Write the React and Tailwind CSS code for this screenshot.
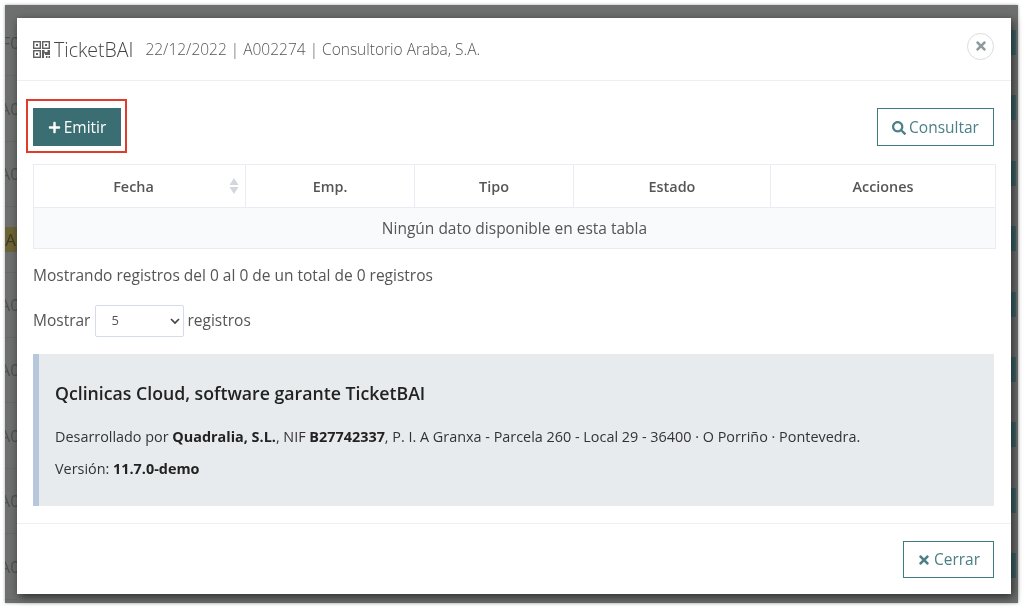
import { FaPlus, FaSearch, FaTimes } from "react-icons/fa";

const leftRows = ["F0", "A0", "A0", "A", "A0", "A0", "A0", "A0", "A0"];
const columns = [
  { label: "Fecha", width: "w-[212px] pr-[12px]", sort: true },
  { label: "Emp.", width: "w-[169px]" },
  { label: "Tipo", width: "w-[159px]" },
  { label: "Estado", width: "w-[197px]" },
  { label: "Acciones", width: "flex-1" },
];

function QrIcon() {
  return (
    <svg width="17" height="17" viewBox="0 0 17 17" className="text-[#5f5f5f]">
      <g fill="none" stroke="currentColor" strokeWidth="1.4">
        <rect x="0.7" y="0.7" width="6.6" height="6.6" />
        <rect x="9.7" y="0.7" width="6.6" height="6.6" />
        <rect x="0.7" y="9.7" width="6.6" height="6.6" />
      </g>
      <g fill="currentColor">
        <rect x="3" y="3" width="2" height="2" />
        <rect x="12" y="3" width="2" height="2" />
        <rect x="3" y="12" width="2" height="2" />
        <path d="M9 9h2.5v2h3V9H17v5h-5v-1.5H11V17H9zM13 15h1.5v2H13zM15.5 15H17v2h-1.5z" />
      </g>
    </svg>
  );
}

function SortIcon() {
  return (
    <svg width="10" height="16" viewBox="0 0 10 16" className="absolute right-[6px] top-[13px]">
      <path d="M5 0l4.5 7h-9z" fill="#d3d6da" />
      <path d="M5 16L.5 9h9z" fill="#d3d6da" />
    </svg>
  );
}

export default function App() {
  return (
    <div className="h-[609px] w-[1024px] overflow-hidden bg-white pt-[5px] pl-[5px] blur-[0.45px] font-['Open_Sans',sans-serif]">
      <div className="grid h-[598px] w-[1013px] grid-cols-[12px_994px_7px] bg-[#6e6f6f] shadow-[0_0_3px_rgba(0,0,0,0.35)]">
        {/* page behind the overlay, left edge */}
        <div className="flex flex-col overflow-hidden pt-[6px]">
          {leftRows.map((t, i) => (
            <div
              key={i}
              className="flex h-[65.4px] shrink-0 items-center justify-end border-b border-[#676868] text-[17px] whitespace-nowrap text-[#505050]"
            >
              {t === "A" ? (
                <span className="flex h-[25px] w-full items-center justify-end bg-[#6d6436] pr-[1px] text-[#3f3a20]">A</span>
              ) : (
                <span className="-mr-[3px]">{t}</span>
              )}
            </div>
          ))}
        </div>

        <div className="z-10 mt-[13px] mb-[9px] flex flex-col bg-white shadow-[2px_3px_9px_rgba(0,0,0,0.6)]">
          <header className="flex h-[63px] items-center border-b border-[#eeeff0] pr-[17px] pl-[16px]">
            <QrIcon />
            <h1 className="mt-[1px] ml-[4px] text-[19.5px] font-light text-[#444]">TicketBAI</h1>
            <span className="mt-[1px] ml-[12px] text-[15.5px] font-light text-[#555]">22/12/2022 | A002274 | Consultorio Araba, S.A.</span>
            <button className="-mt-[6px] ml-auto flex h-[27px] w-[27px] items-center justify-center rounded-full border border-[#d9dcdd] text-[#8c9a9c]">
              <FaTimes size={14} />
            </button>
          </header>

          <div className="flex-1 pt-[27px] pr-[17px] pl-[16px]">
            <div className="flex items-center justify-between">
              <button className="relative flex h-[38px] w-[88px] items-center justify-center gap-[3px] bg-[#3a6e73] pt-[1px] text-[15.5px] text-white">
                <FaPlus size={13} />
                Emitir
                <span className="absolute -top-[9px] -left-[7px] h-[54px] w-[101px] border-[2.5px] border-[#e03c2b]" />
              </button>
              <button className="flex h-[38px] w-[117px] items-center justify-center gap-[3px] border border-[#3f7a80] pt-[1px] text-[15.5px] text-[#4a8086]">
                <FaSearch size={14} />
                Consultar
              </button>
            </div>

            <div className="mt-[18px] w-[963px] border border-[#e9edf3]">
              <div className="flex h-[43px] border-b border-[#e9edf3]">
                {columns.map((c) => (
                  <div
                    key={c.label}
                    className={`relative flex items-center justify-center border-r border-[#e9edf3] pt-[2px] text-[14.4px] font-semibold text-[#555] last:border-r-0 ${c.width}`}
                  >
                    {c.label}
                    {c.sort && <SortIcon />}
                  </div>
                ))}
              </div>
              <div className="flex h-[40px] items-center justify-center bg-[#f8fafc] pt-[1px] text-[15.5px] text-[#555]">
                Ningún dato disponible en esta tabla
              </div>
            </div>

            <p className="mt-[16px] text-[15.5px] leading-[20px] text-[#555]">Mostrando registros del 0 al 0 de un total de 0 registros</p>

            <div className="mt-[19px] flex items-center text-[15.5px] text-[#555]">
              Mostrar
              <div className="mt-[1px] mr-[3px] ml-[5px] flex h-[32px] w-[89px] items-center justify-between rounded-[2px] border border-[#d5dbe8] pr-[3px] pl-[15px] text-[13px]">
                5
                <svg width="10" height="7" viewBox="0 0 10 7" fill="none" stroke="#444" strokeWidth="1.7">
                  <path d="M1 1l4 4 4-4" />
                </svg>
              </div>
              registros
            </div>

            <div className="mt-[17px] h-[152px] border-l-[6px] border-[#b8c8dc] bg-[#e8ebee] pt-[27px] pl-[16px] text-[14.4px] text-[#333]">
              <h2 className="text-[17.7px] leading-[24px] font-semibold text-[#222]">Qclinicas Cloud, software garante TicketBAI</h2>
              <p className="mt-[22px] leading-[20px]">
                Desarrollado por <b className="text-[#222]">Quadralia, S.L.</b>, NIF <b className="text-[#222]">B27742337</b>, P. I. A Granxa - Parcela 260 - Local 29 - 36400 · O Porriño · Pontevedra.
              </p>
              <p className="mt-[12px] leading-[20px]">
                Versión: <b className="text-[#222]">11.7.0-demo</b>
              </p>
            </div>
          </div>

          <footer className="flex h-[71px] items-center justify-end border-t border-[#eeeff0] pr-[17px]">
            <button className="flex h-[37px] w-[91px] items-center justify-center gap-[3px] border border-[#3f7a80] pt-[1px] text-[15.5px] text-[#4a8086]">
              <FaTimes size={14} />
              Cerrar
            </button>
          </footer>
        </div>

        {/* page behind the overlay, right edge */}
        <div className="flex flex-col overflow-hidden pt-[25px]">
          {leftRows.map((_, i) => (
            <div key={i} className="flex h-[65.4px] shrink-0 items-start">
              <div className="h-[25px] w-[5px] bg-[#3d6468]" />
            </div>
          ))}
        </div>
      </div>
    </div>
  );
}
